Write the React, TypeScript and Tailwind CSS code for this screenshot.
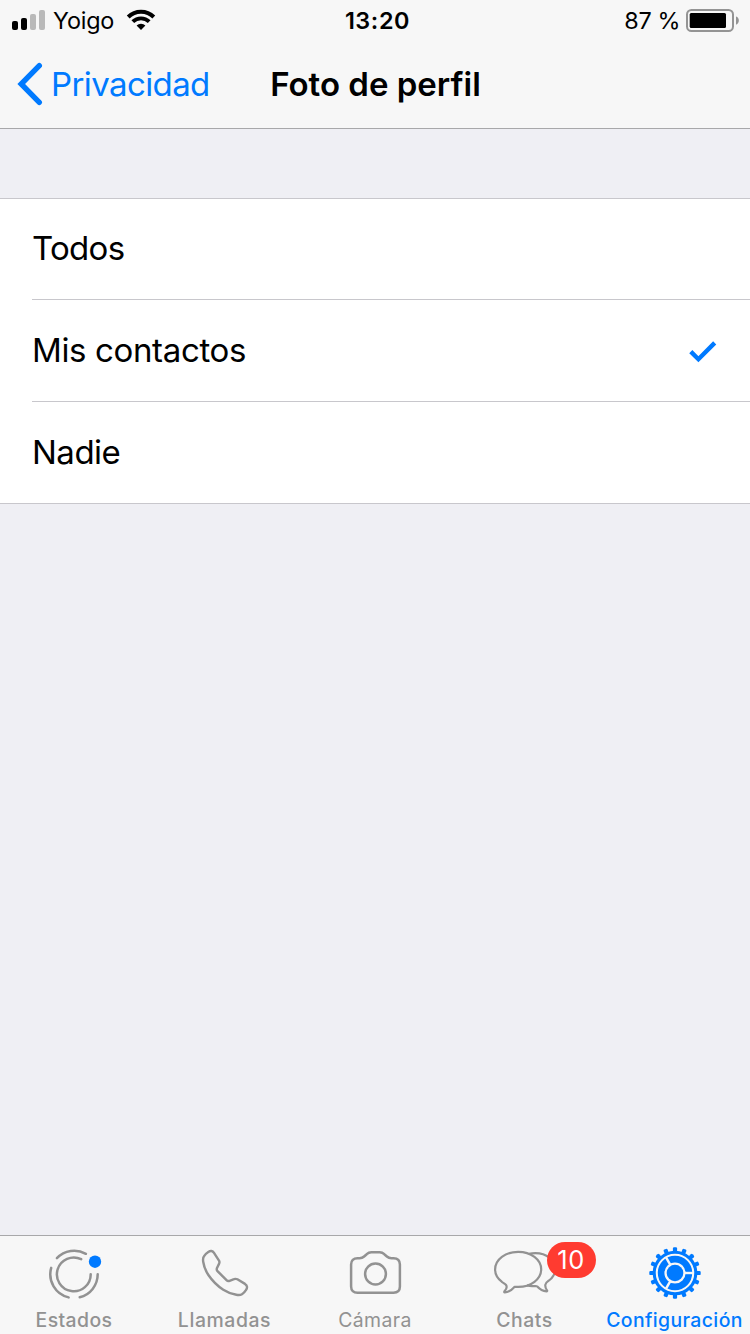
import { useState, type ReactNode } from "react";
import clsx from "clsx";

const OPTIONS = [
  { label: "Todos", row: "h-[101px]", text: "tracking-[-0.7px]" },
  { label: "Mis contactos", row: "h-[102px]", text: "tracking-[-0.36px]" },
  { label: "Nadie", row: "h-[101px]", text: "tracking-[-0.5px]" },
];

const TEETH = Array.from({ length: 16 }, (_, i) => i * 22.5);

function SignalIcon() {
  return (
    <svg width="33" height="20" viewBox="0 0 33 20">
      <rect x="0" y="11" width="6" height="9" rx="2" fill="#000" />
      <rect x="9" y="8" width="6" height="12" rx="2" fill="#000" />
      <rect x="18" y="4" width="6" height="16" rx="2" fill="#b9b9b9" />
      <rect x="27" y="0" width="6" height="20" rx="2" fill="#b9b9b9" />
    </svg>
  );
}

function WifiIcon() {
  return (
    <svg width="30" height="22" viewBox="-15 -21 30 22" fill="none" stroke="#000">
      <path d="M-12.8 -13 A18.2 18.2 0 0 1 12.8 -13" strokeWidth="4" />
      <path d="M-8.2 -8.3 A11.6 11.6 0 0 1 8.2 -8.3" strokeWidth="3.8" />
      <path d="M0 0 L-4.4 -4.5 A6.4 6.4 0 0 1 4.4 -4.5 Z" fill="#000" stroke="none" />
    </svg>
  );
}

function BatteryIcon() {
  return (
    <svg width="54" height="23" viewBox="0 0 54 23">
      <rect x="1" y="1" width="46" height="21" rx="4.5" fill="none" stroke="#949494" strokeWidth="2" />
      <rect x="3.7" y="4" width="36.3" height="15" rx="1.5" fill="#000" />
      <path d="M50 7.5 C53.8 8.5 53.8 14.5 50 15.7 Z" fill="#949494" />
    </svg>
  );
}

function StatusIcon() {
  return (
    <svg width="60" height="60" viewBox="1 0 60 60" fill="none" stroke="currentColor" strokeWidth="2.5" strokeLinecap="round">
      <path d="M12.9 14.2 A23.7 23.7 0 0 1 41.9 9.8" />
      <path d="M7.2 23.9 A23.7 23.7 0 0 0 24.6 53.4" />
      <path d="M35.7 53.3 A23.7 23.7 0 0 0 53.7 30.3" />
      <path d="M37.2 15.2 A16.9 16.9 0 1 0 46.7 30.3" />
      <circle cx="51" cy="17.7" r="6.2" fill="#007aff" stroke="none" />
    </svg>
  );
}

function PhoneIcon() {
  return (
    <svg width="60" height="60" viewBox="0 0 60 60" fill="none" stroke="currentColor" strokeWidth="2.4" strokeLinejoin="round">
      <path d="M13.3 7.9 C15.6 6.4 17.7 6.8 19 8.8 L24 16.6 C24.6 17.7 24.6 18.8 24 19.9 L22 24 C21.5 25.2 21.6 26.2 22.5 27.1 L31.5 36.1 C32.4 37 33.5 37.2 34.6 36.8 L39 35.2 C40.2 34.7 41.3 34.7 42.4 35.3 L50 39.9 C52.3 41.4 52.6 43.6 51.1 45.8 C50 47.5 48.6 49.1 46.9 50.3 C45.5 51.2 43.4 51.2 41.3 50.8 C36.8 50.1 32.3 48.4 28.3 45.8 C22.6 42 17.3 36.8 13.4 31 C10.7 27 8.9 22.2 8.2 17.7 C7.9 15.7 8 13.7 8.9 12.3 C10 10.5 11.6 9 13.3 7.9 Z" />
    </svg>
  );
}

function CameraIcon() {
  return (
    <svg width="60" height="60" viewBox="0 0 60 60" fill="none" stroke="currentColor" strokeWidth="2.5">
      <path d="M12.5 14.2 H14.5 C16.5 14.2 17.8 13.7 19.1 12.5 L21.7 10.2 C23.1 8.9 24.3 8.3 26.3 8.3 H34.7 C36.7 8.3 37.9 8.9 39.3 10.2 L41.9 12.5 C43.2 13.7 44.5 14.2 46.5 14.2 H48.5 C52.6 14.2 54.9 16.8 54.9 20.6 V42.6 C54.9 46.4 52.6 48.7 48.5 48.7 H12.5 C8.4 48.7 6.1 46.4 6.1 42.6 V20.6 C6.1 16.8 8.4 14.2 12.5 14.2 Z" />
      <circle cx="30.5" cy="30" r="10.4" />
    </svg>
  );
}

function ChatsIcon() {
  return (
    <svg width="68" height="60" viewBox="1 0 68 60" fill="none" stroke="currentColor" strokeWidth="2.2" strokeLinejoin="round">
      <path d="M24.7 42.8 C22.3 45.6 18.6 48.2 14.8 48.4 C14.2 48.4 14 47.9 14.5 47.3 C16.3 45.2 17.2 42.6 16 41 C15.2 40 13.4 39.2 11.7 37.7 C7.6 34.5 5.1 30.3 5.1 25.5 C5.1 15.6 15.5 7.8 28.2 7.8 C40.9 7.8 51.2 15.6 51.2 25.3 C51.2 35.1 40.9 42.9 28.2 42.9 C27 42.9 25.8 42.9 24.7 42.8 Z" />
      <path d="M39.2 9.9 C41.2 9.3 43.3 9.1 45.4 9.1 C56.5 9.1 65.2 16 65.2 24.9 C65.2 29.8 62.7 33.9 58.8 36.6 C56.5 38.3 55.5 39 55.3 40.8 C55.1 43 56 45 57 46.3 C57.4 46.9 57.2 47.3 56.5 47.3 C52.9 47.1 49.5 45 47.3 42.5 C46.4 41.7 44.4 42.3 42.2 42.1 C40.3 42 38.4 41.7 36.8 41.4" />
    </svg>
  );
}

function GearIcon() {
  return (
    <svg width="60" height="60" viewBox="-30 -29 60 60">
      {TEETH.map((angle) => (
        <rect key={angle} x="-2.1" y="-25.7" width="4.2" height="5" rx="1.2" fill="currentColor" transform={`rotate(${angle})`} />
      ))}
      <circle r="20.8" fill="none" stroke="currentColor" strokeWidth="3.1" />
      <circle r="13.9" fill="none" stroke="currentColor" strokeWidth="6.6" />
      {[0, 120, 240].map((angle) => (
        <path key={angle} d="M9 0 H18" stroke="#f7f7f7" strokeWidth="2.4" transform={`rotate(${angle})`} />
      ))}
      <circle r="8.3" fill="currentColor" />
    </svg>
  );
}

function Tab({ label, text, active, children }: { label: string; text: string; active?: boolean; children: ReactNode }) {
  return (
    <button
      type="button"
      className={clsx("flex w-[150px] flex-col items-center pt-[8px]", active ? "text-[#007aff]" : "text-[#929292]")}
    >
      {children}
      <span className={clsx("mt-[4px] whitespace-nowrap text-[19.4px] leading-[24px]", text)}>{label}</span>
    </button>
  );
}

export default function App() {
  const [selected, setSelected] = useState("Mis contactos");

  return (
    <div className="flex h-[1334px] w-[750px] flex-col overflow-hidden bg-[#efeff4] font-['Inter','Liberation_Sans',sans-serif] text-black">
      <header className="h-[129px] border-b border-[#a8a8aa] bg-[#f7f7f7]">
        <div className="grid h-[40px] grid-cols-3 items-center">
          <div className="flex items-center pl-[12px]">
            <SignalIcon />
            <span className="ml-[8px] w-[73px] pt-[2px] text-[23.4px] leading-[28px] tracking-[-0.2px]">Yoigo</span>
            <WifiIcon />
          </div>
          <span className="pl-[5px] pt-[2px] text-center text-[23.4px] font-semibold leading-[28px] tracking-[0.6px]">
            13:20
          </span>
          <div className="flex items-center justify-end gap-[6px] pr-[10px]">
            <span className="pt-[2px] text-[23.4px] leading-[28px] tracking-[-0.4px]">87 %</span>
            <BatteryIcon />
          </div>
        </div>
        <div className="grid h-[88px] grid-cols-[250px_250px_250px] items-center">
          <button type="button" className="flex items-center pl-[16px] text-[#007aff]">
            <svg width="28" height="44" viewBox="0 0 28 44" fill="none" stroke="currentColor" strokeWidth="5.4" strokeLinecap="round">
              <path d="M23.3 3.7 L5.2 22 L23.3 40.3" />
            </svg>
            <span className="ml-[7px] text-[33px] leading-[40px] tracking-[-0.6px]">Privacidad</span>
          </button>
          <h1 className="whitespace-nowrap pl-[1px] text-center text-[33px] font-semibold leading-[40px]">Foto de perfil</h1>
        </div>
      </header>

      <main className="flex-1 pt-[69px]">
        <ul className="border-y border-[#c8c7cc] bg-white pl-[32px]">
          {OPTIONS.map(({ label, row, text }) => (
            <li key={label} className={clsx("border-b border-[#c8c7cc] last:border-b-0", row)}>
              <button
                type="button"
                onClick={() => setSelected(label)}
                className="flex h-full w-full items-center justify-between pr-[32px]"
              >
                <span className={clsx("pb-[2px] text-[33px] leading-[40px]", text)}>{label}</span>
                {selected === label && (
                  <svg className="mt-[2px]" width="30" height="22" viewBox="0 0 30 22" fill="none" stroke="#007aff" strokeWidth="4.4">
                    <path d="M2.8 10.6 L10.4 18.2 L26.7 1.9" />
                  </svg>
                )}
              </button>
            </li>
          ))}
        </ul>
      </main>

      <nav className="flex h-[99px] border-t border-[#a8a8aa] bg-[#f7f7f7]">
        <Tab label="Estados" text="pr-[2px] font-medium tracking-[0.4px]">
          <StatusIcon />
        </Tab>
        <Tab label="Llamadas" text="pr-[1px] font-medium tracking-[0.6px]">
          <PhoneIcon />
        </Tab>
        <Tab label="Cámara" text="tracking-[0.4px]">
          <CameraIcon />
        </Tab>
        <Tab label="Chats" text="pr-[1px] font-medium tracking-[0.5px]">
          <span className="relative">
            <ChatsIcon />
            <span className="absolute -top-[2px] left-[56px] flex h-[36px] w-[49px] items-center justify-center rounded-full bg-[#ff3b30] pr-[1px] pt-[1px] text-[25.4px] tracking-[0.5px] text-white">
              10
            </span>
          </span>
        </Tab>
        <Tab label="Configuración" text="pr-[1px] font-medium tracking-[0.4px]" active>
          <GearIcon />
        </Tab>
      </nav>
    </div>
  );
}
